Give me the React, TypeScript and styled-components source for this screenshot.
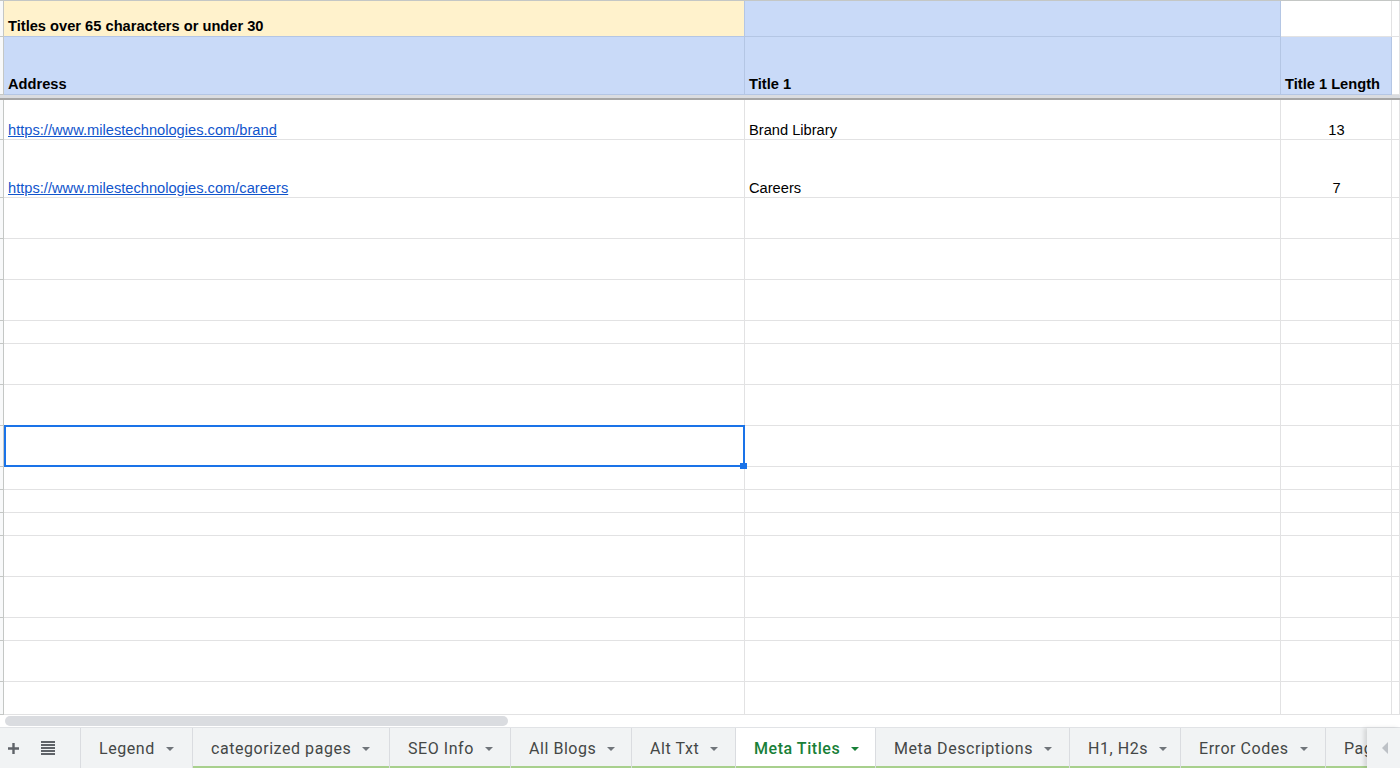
import { FC } from "react";
import styled, { createGlobalStyle } from "styled-components";

const GlobalStyle = createGlobalStyle`
    html, body {
        margin: 0;
        padding: 0;
        background: #ffffff;
        overflow: hidden;
    }
    * {
        box-sizing: border-box;
    }
`;

const COLS = "4px 741px 536px 111px 1fr";
const GRID = "#e2e2e3";

const Page = styled.div`
    display: flex;
    flex-direction: column;
    width: 1400px;
    height: 768px;
    overflow: hidden;
    font-family: "Liberation Sans", Arial, sans-serif;
`;

const Sheet = styled.div`
    flex: 1;
    overflow: hidden;
    display: flex;
    flex-direction: column;
`;

const Frozen = styled.div`
    border-top: 1px solid #c4c7c5;
`;

const Row = styled.div<{ $h: number }>`
    display: grid;
    grid-template-columns: ${COLS};
    height: ${(p) => p.$h}px;
    flex-shrink: 0;
`;

const RowHead = styled.div`
    background: #f8f9fa;
    border-right: 1px solid #c4c7c5;
    border-bottom: 1px solid #c4c7c5;
`;

const Cell = styled.div<{ $fill?: string; $bold?: boolean; $align?: string; $tint?: boolean }>`
    position: relative;
    display: flex;
    align-items: flex-end;
    justify-content: ${(p) => p.$align || "flex-start"};
    padding: 0 3px ${(p) => (p.$tint ? 1 : 0)}px 4px;
    background: ${(p) => p.$fill || "#ffffff"};
    border-right: 1px solid ${(p) => (p.$tint ? "#b4c6e4" : GRID)};
    border-bottom: 1px solid ${(p) => (p.$tint ? "#b4c6e4" : GRID)};
    font-size: 14.67px;
    line-height: 17px;
    font-weight: ${(p) => (p.$bold ? 700 : 400)};
    color: #000000;
    white-space: nowrap;
`;

const Link = styled.a`
    color: #1155cc;
    text-decoration: underline;
`;

const FreezeBar = styled.div`
    height: 5px;
    flex-shrink: 0;
    background: #dadce0;
    border-bottom: 2px solid #a6a6a6;
`;

const Selection = styled.div`
    position: absolute;
    top: -1px;
    left: 0;
    right: -1px;
    bottom: -1px;
    border: 2px solid #1a73e8;
    pointer-events: none;
    z-index: 2;
`;

const Handle = styled.div`
    position: absolute;
    right: -4px;
    bottom: -4px;
    width: 7px;
    height: 6px;
    background: #1a73e8;
`;

const ScrollTrack = styled.div`
    height: 12px;
    flex-shrink: 0;
    background: #ffffff;
    padding: 1px 0 1px 5px;
`;

const Thumb = styled.div`
    width: 503px;
    height: 10px;
    border-radius: 5px;
    background: #dadce0;
`;

const TabBar = styled.div`
    display: flex;
    height: 41px;
    flex-shrink: 0;
    background: #f1f3f4;
    border-top: 1px solid #e1e3e6;
    font-family: Roboto, "Liberation Sans", sans-serif;
`;

const Tools = styled.div`
    width: 81px;
    flex-shrink: 0;
    display: flex;
    align-items: center;
    gap: 21px;
    padding-left: 7px;
    border-right: 1px solid #dadce0;
    color: #5f6368;
`;

const Tabs = styled.div`
    flex: 1;
    display: flex;
    overflow: hidden;
`;

const Tab = styled.div<{ $w: number; $active?: boolean; $mark?: boolean }>`
    position: relative;
    width: ${(p) => p.$w}px;
    flex-shrink: 0;
    display: flex;
    align-items: center;
    gap: 11px;
    padding-left: 18px;
    border-right: 1px solid #dadce0;
    background: ${(p) => (p.$active ? "#ffffff" : "transparent")};
    color: ${(p) => (p.$active ? "#188038" : "#444746")};
    font-size: 16px;
    letter-spacing: 0.55px;
    font-weight: ${(p) => (p.$active ? 500 : 400)};
    white-space: nowrap;
    overflow: hidden;
    box-shadow: ${(p) => (p.$mark ? "inset 0 -2px 0 #a8d08d" : "none")};
`;

const Caret = styled.span<{ $active?: boolean }>`
    width: 0;
    height: 0;
    border-left: 4px solid transparent;
    border-right: 4px solid transparent;
    border-top: 4px solid ${(p) => (p.$active ? "#188038" : "#70757a")};
    margin-top: 1px;
`;

const ScrollButtons = styled.div`
    width: 33px;
    flex-shrink: 0;
    display: flex;
    align-items: center;
    justify-content: center;
    background: #f1f3f4;
    box-shadow: -3px 0 4px rgba(0, 0, 0, 0.12);
    z-index: 1;
`;

const LeftArrow = styled.span`
    width: 0;
    height: 0;
    border-top: 6px solid transparent;
    border-bottom: 6px solid transparent;
    border-right: 6px solid #bdc1c6;
    margin-left: 2px;
`;

const PlusIcon: FC = () => (
    <svg width="13" height="13" viewBox="0 0 13 13">
        <path d="M6.5 1v11M1 6.5h11" stroke="currentColor" strokeWidth="2.4" />
    </svg>
);

const ListIcon: FC = () => (
    <svg width="14" height="14" viewBox="0 0 14 14">
        {[1, 4, 7, 10, 13].map((y) => (
            <rect key={y} x="0" y={y - 1} width="14" height="2" fill="currentColor" />
        ))}
    </svg>
);

const dataRows: { h: number; url?: string; title?: string; len?: string }[] = [
    { h: 40, url: "https://www.milestechnologies.com/brand", title: "Brand Library", len: "13" },
    { h: 58, url: "https://www.milestechnologies.com/careers", title: "Careers", len: "7" },
    { h: 41 },
    { h: 41 },
    { h: 41 },
    { h: 23 },
    { h: 41 },
    { h: 41 },
    { h: 41 },
    { h: 23 },
    { h: 23 },
    { h: 23 },
    { h: 41 },
    { h: 41 },
    { h: 23 },
    { h: 41 },
    { h: 33 },
];

const SELECTED = 8;

const tabs: { name: string; w: number; active?: boolean; mark?: boolean }[] = [
    { name: "Legend", w: 112 },
    { name: "categorized pages", w: 197, mark: true },
    { name: "SEO Info", w: 121, mark: true },
    { name: "All Blogs", w: 121, mark: true },
    { name: "Alt Txt", w: 104, mark: true },
    { name: "Meta Titles", w: 140, active: true, mark: true },
    { name: "Meta Descriptions", w: 194, mark: true },
    { name: "H1, H2s", w: 111, mark: true },
    { name: "Error Codes", w: 145, mark: true },
    { name: "Page Speed", w: 150, mark: true },
];

const App: FC = () => {
    return (
        <Page>
            <GlobalStyle />
            <Sheet>
                <Frozen>
                    <Row $h={36}>
                        <RowHead />
                        <Cell $fill="#fff2cc" $bold $tint>
                            Titles over 65 characters or under 30
                        </Cell>
                        <Cell $fill="#c9daf8" $tint />
                        <Cell />
                        <Cell />
                    </Row>
                    <Row $h={58}>
                        <RowHead />
                        <Cell $fill="#c9daf8" $bold $tint>
                            Address
                        </Cell>
                        <Cell $fill="#c9daf8" $bold $tint>
                            Title 1
                        </Cell>
                        <Cell $fill="#c9daf8" $bold $tint>
                            Title 1 Length
                        </Cell>
                        <Cell />
                    </Row>
                </Frozen>
                <FreezeBar />
                {dataRows.map((r, i) => (
                    <Row key={i} $h={r.h}>
                        <RowHead />
                        <Cell>
                            {r.url && <Link href={r.url}>{r.url}</Link>}
                            {i === SELECTED && (
                                <Selection>
                                    <Handle />
                                </Selection>
                            )}
                        </Cell>
                        <Cell>{r.title}</Cell>
                        <Cell $align="center">{r.len}</Cell>
                        <Cell />
                    </Row>
                ))}
            </Sheet>
            <ScrollTrack>
                <Thumb />
            </ScrollTrack>
            <TabBar>
                <Tools>
                    <PlusIcon />
                    <ListIcon />
                </Tools>
                <Tabs>
                    {tabs.map((t) => (
                        <Tab key={t.name} $w={t.w} $active={t.active} $mark={t.mark}>
                            {t.name}
                            <Caret $active={t.active} />
                        </Tab>
                    ))}
                </Tabs>
                <ScrollButtons>
                    <LeftArrow />
                </ScrollButtons>
            </TabBar>
        </Page>
    );
};

export default App;
